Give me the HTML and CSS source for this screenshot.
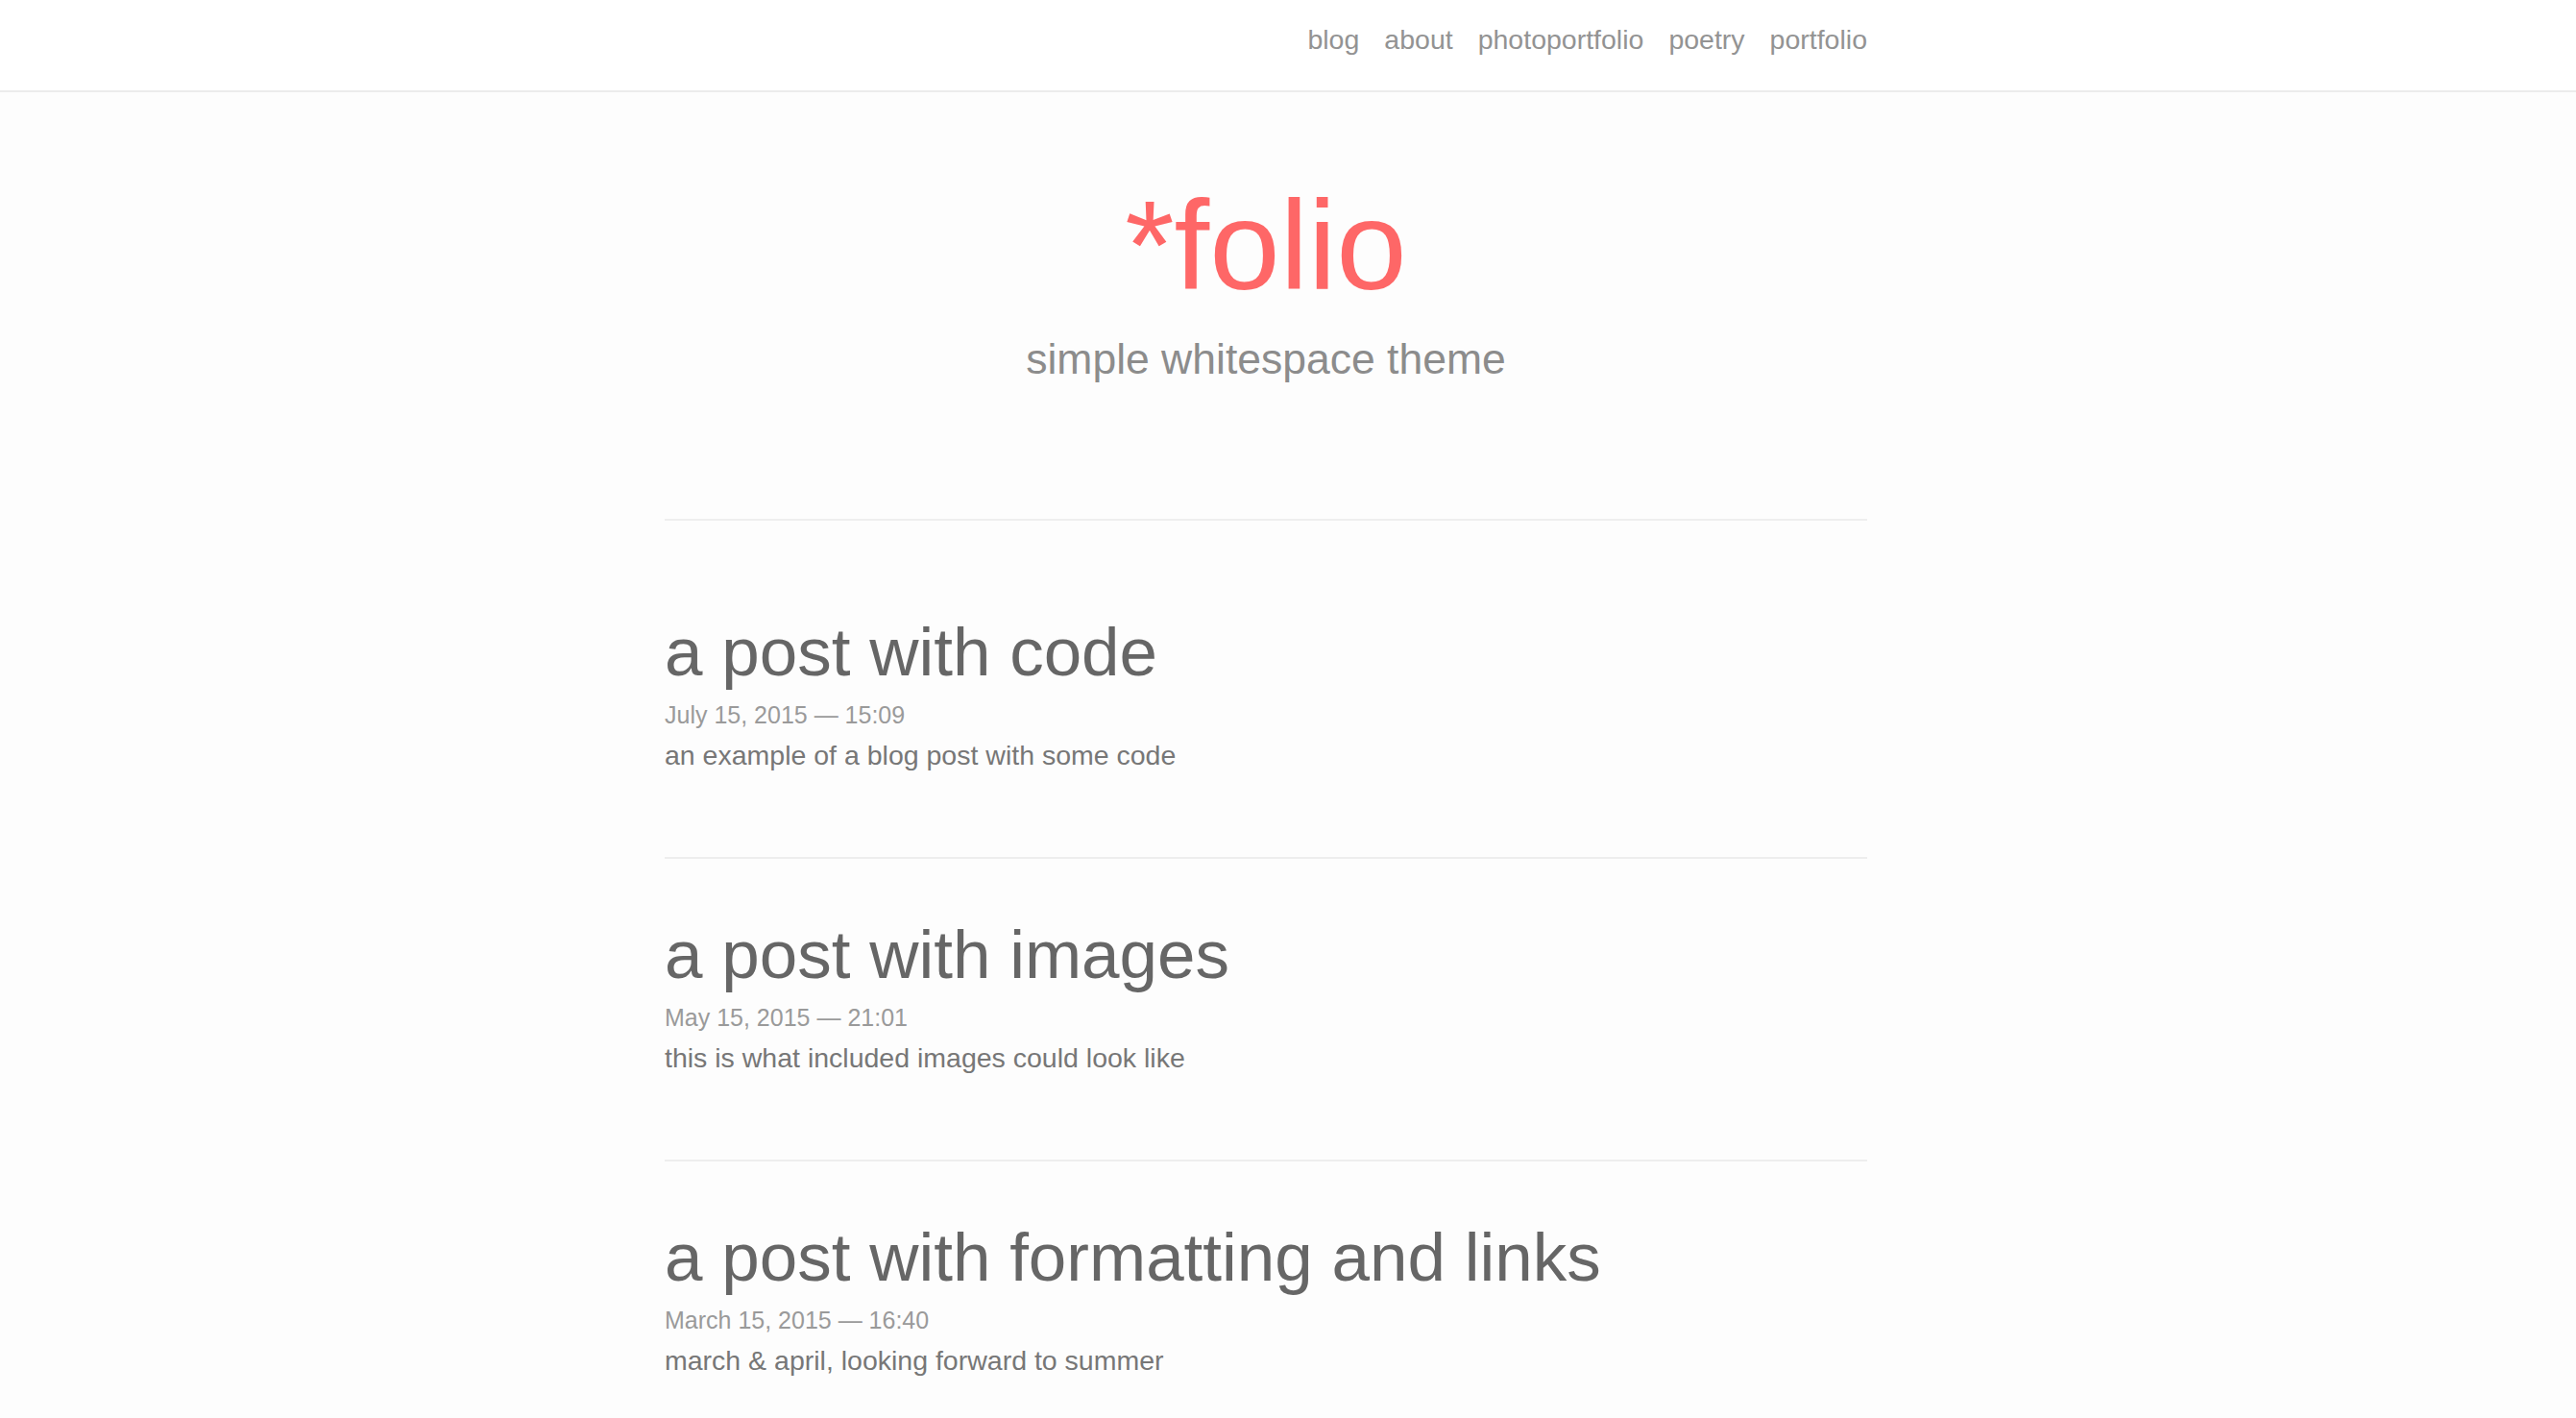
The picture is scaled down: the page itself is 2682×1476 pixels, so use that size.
FILE: index.html
```html
<!DOCTYPE html>
<html lang="en">
<head>
<meta charset="utf-8">
<title>*folio</title>
<link rel="stylesheet" href="styles.css">
</head>
<body>
<header class="site-nav">
  <div class="container nav-inner">
    <nav class="nav-links">
      <a href="#">blog</a>
      <a href="#">about</a>
      <a href="#">photoportfolio</a>
      <a href="#">poetry</a>
      <a href="#">portfolio</a>
    </nav>
  </div>
</header>
<main class="container">
  <div class="masthead">
    <h1 class="site-title"><span>*</span>folio</h1>
    <p class="site-subtitle">simple whitespace theme</p>
  </div>
  <hr class="rule">
  <ul class="post-list">
    <li class="post">
      <h2 class="post-title">a post with code</h2>
      <p class="post-meta">July 15, 2015 — 15:09</p>
      <p class="post-desc">an example of a blog post with some code</p>
    </li>
    <li class="post">
      <h2 class="post-title">a post with images</h2>
      <p class="post-meta">May 15, 2015 — 21:01</p>
      <p class="post-desc">this is what included images could look like</p>
    </li>
    <li class="post">
      <h2 class="post-title">a post with formatting and links</h2>
      <p class="post-meta">March 15, 2015 — 16:40</p>
      <p class="post-desc">march &amp; april, looking forward to summer</p>
    </li>
  </ul>
</main>
</body>
</html>
```

FILE: styles.css
```css
html, body {
  margin: 0;
  padding: 0;
}
body {
  background: #fdfdfd;
  font-family: "Liberation Sans", Arial, Helvetica, sans-serif;
  color: #666;
}
.container {
  width: 1252px;
  margin-left: calc(50% - 649px);
}
.site-nav {
  background: #ffffff;
  border-bottom: 2px solid #ececec;
  height: 94px;
}
.nav-inner {
  display: flex;
  justify-content: flex-end;
}
.nav-links {
  display: flex;
  gap: 26px;
  font-size: 28.5px;
  line-height: 82px;
}
.nav-links a {
  color: #939393;
  text-decoration: none;
}
.masthead {
  text-align: center;
  padding-top: 94px;
}
.site-title {
  margin: 0;
  font-weight: normal;
  font-size: 132px;
  line-height: 132px;
  color: #fe6767;
}
.site-subtitle {
  margin: 27px 0 0;
  font-size: 44.5px;
  line-height: 50px;
  color: #8c8c8c;
}
.rule {
  margin: 141px 0 0;
  border: 0;
  border-top: 2px solid #eeeeee;
  height: 0;
}
.post-list {
  list-style: none;
  margin: 37px 0 0;
  padding: 0;
}
.post {
  padding: 60px 0 87px;
  border-bottom: 2px solid #eeeeee;
}
.post-title {
  margin: 0;
  font-weight: normal;
  font-size: 71px;
  line-height: 80px;
  color: #666666;
}
.post-meta {
  margin: 10px 0 0;
  font-size: 25px;
  line-height: 30px;
  color: #9a9a9a;
}
.post-desc {
  margin: 8px 0 0;
  font-size: 28.5px;
  line-height: 38px;
  color: #777777;
}
```
